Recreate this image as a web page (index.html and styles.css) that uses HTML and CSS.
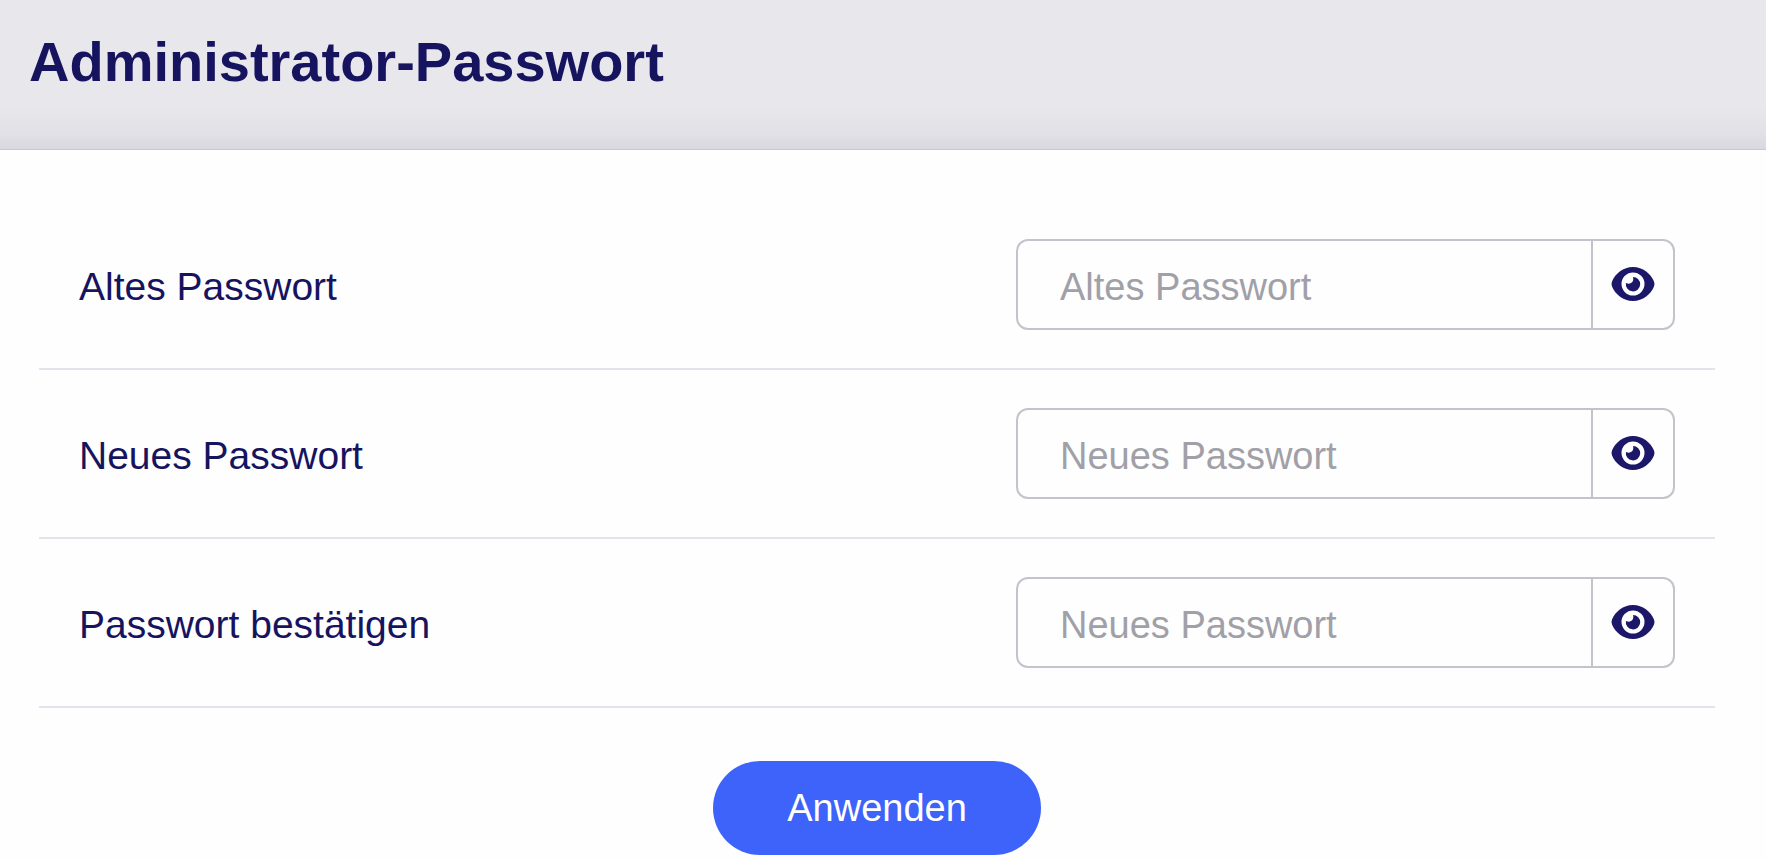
FILE: index.html
```html
<!DOCTYPE html>
<html lang="de">
<head>
  <meta charset="UTF-8" />
  <meta name="viewport" content="width=device-width, initial-scale=1.0"/>
  <title>Administrator-Passwort</title>
  <link rel="stylesheet" href="styles.css">
</head>
<body>
  <header class="page-header">
    <h1>Administrator-Passwort</h1>
  </header>

  <!-- eye icon, shared by all toggle buttons -->
  <svg class="icon-defs" width="0" height="0" aria-hidden="true">
    <symbol id="eye" viewBox="0 0 44 36">
      <path fill="currentColor" fill-rule="evenodd" d="M22 1C12 1 4.500 7.500 1 15.500Q0 18 1 20.500C4.500 28.500 12 35 22 35S39.500 28.500 43 20.500Q44 18 43 15.500C39.500 7.500 32 1 22 1ZM22 6.500A11.500 11.500 0 1 1 22 29.500A11.500 11.500 0 1 1 22 6.500Z"/>
      <path fill="currentColor" d="M22 11A7.200 7.200 0 1 1 14.900 17Q18.500 18.500 20.800 16.600Q23 14.400 22 11Z"/>
    </symbol>
  </svg>

  <form class="password-form" onsubmit="return false">
    <div class="row">
      <label for="oldPassword">Altes Passwort</label>
      <div class="input-group">
        <input type="password" id="oldPassword" placeholder="Altes Passwort">
        <button type="button" class="toggle" aria-label="Passwort anzeigen"><svg><use href="#eye"/></svg></button>
      </div>
    </div>

    <div class="row">
      <label for="newPassword">Neues Passwort</label>
      <div class="input-group">
        <input type="password" id="newPassword" placeholder="Neues Passwort">
        <button type="button" class="toggle" aria-label="Passwort anzeigen"><svg><use href="#eye"/></svg></button>
      </div>
    </div>

    <div class="row">
      <label for="confirmPassword">Passwort bestätigen</label>
      <div class="input-group">
        <input type="password" id="confirmPassword" placeholder="Neues Passwort">
        <button type="button" class="toggle" aria-label="Passwort anzeigen"><svg><use href="#eye"/></svg></button>
      </div>
    </div>

    <button type="submit" class="apply">Anwenden</button>
  </form>

  <script>
    document.querySelectorAll('.toggle').forEach(btn => {
      btn.addEventListener('click', () => {
        const input = btn.previousElementSibling;
        input.type = input.type === 'password' ? 'text' : 'password';
      });
    });
  </script>
</body>
</html>
```
FILE: styles.css
```css
* {
  box-sizing: border-box;
}
body {
  margin: 0;
  font-family: "Liberation Sans", Arial, sans-serif;
  background: #fefefe;
  color: #17145f;
}
.page-header {
  padding: 30px 29px 55px;
  background: linear-gradient(to top, #d9d8de, #e2e1e7 16px, #e8e7ec 44px);
  border-bottom: 1px solid #cac9d1;
}
h1 {
  margin: 0;
  font-size: 56px;
  line-height: 64px;
}
.icon-defs {
  display: block;
}
.password-form {
  display: flex;
  flex-direction: column;
  padding: 51px 51px 0 39px;
}
.row {
  display: flex;
  align-items: center;
  justify-content: space-between;
  padding: 38px 40px;
  border-bottom: 2px solid #e3e3ee;
}
label {
  padding-top: 4px;
  font-size: 39px;
  line-height: 44px;
}
.input-group {
  display: flex;
  flex: 0 1 659px;
  height: 91px;
  border: 2px solid #c4c3cb;
  border-radius: 12px;
}
input {
  flex: 1;
  min-width: 0;
  padding: 6px 42px 0;
  border: none;
  border-radius: 12px;
  background: none;
  color: #17145f;
  font-family: inherit;
  font-size: 38px;
}
input::placeholder {
  color: #a1a0a8;
  opacity: 1;
}
.toggle {
  display: flex;
  align-items: center;
  justify-content: center;
  width: 82px;
  padding: 0 0 2px;
  border: none;
  border-left: 2px solid #c4c3cb;
  background: none;
  color: #1c1768;
  cursor: pointer;
}
.toggle svg {
  width: 44px;
  height: 36px;
}
.apply {
  align-self: center;
  margin-top: 53px;
  padding: 25px 74px;
  border: none;
  border-radius: 48px;
  background: #3e63fa;
  color: #fff;
  font-family: inherit;
  font-size: 38px;
  line-height: 44px;
  cursor: pointer;
}
.apply:hover {
  background: #2f52e0;
}
```
